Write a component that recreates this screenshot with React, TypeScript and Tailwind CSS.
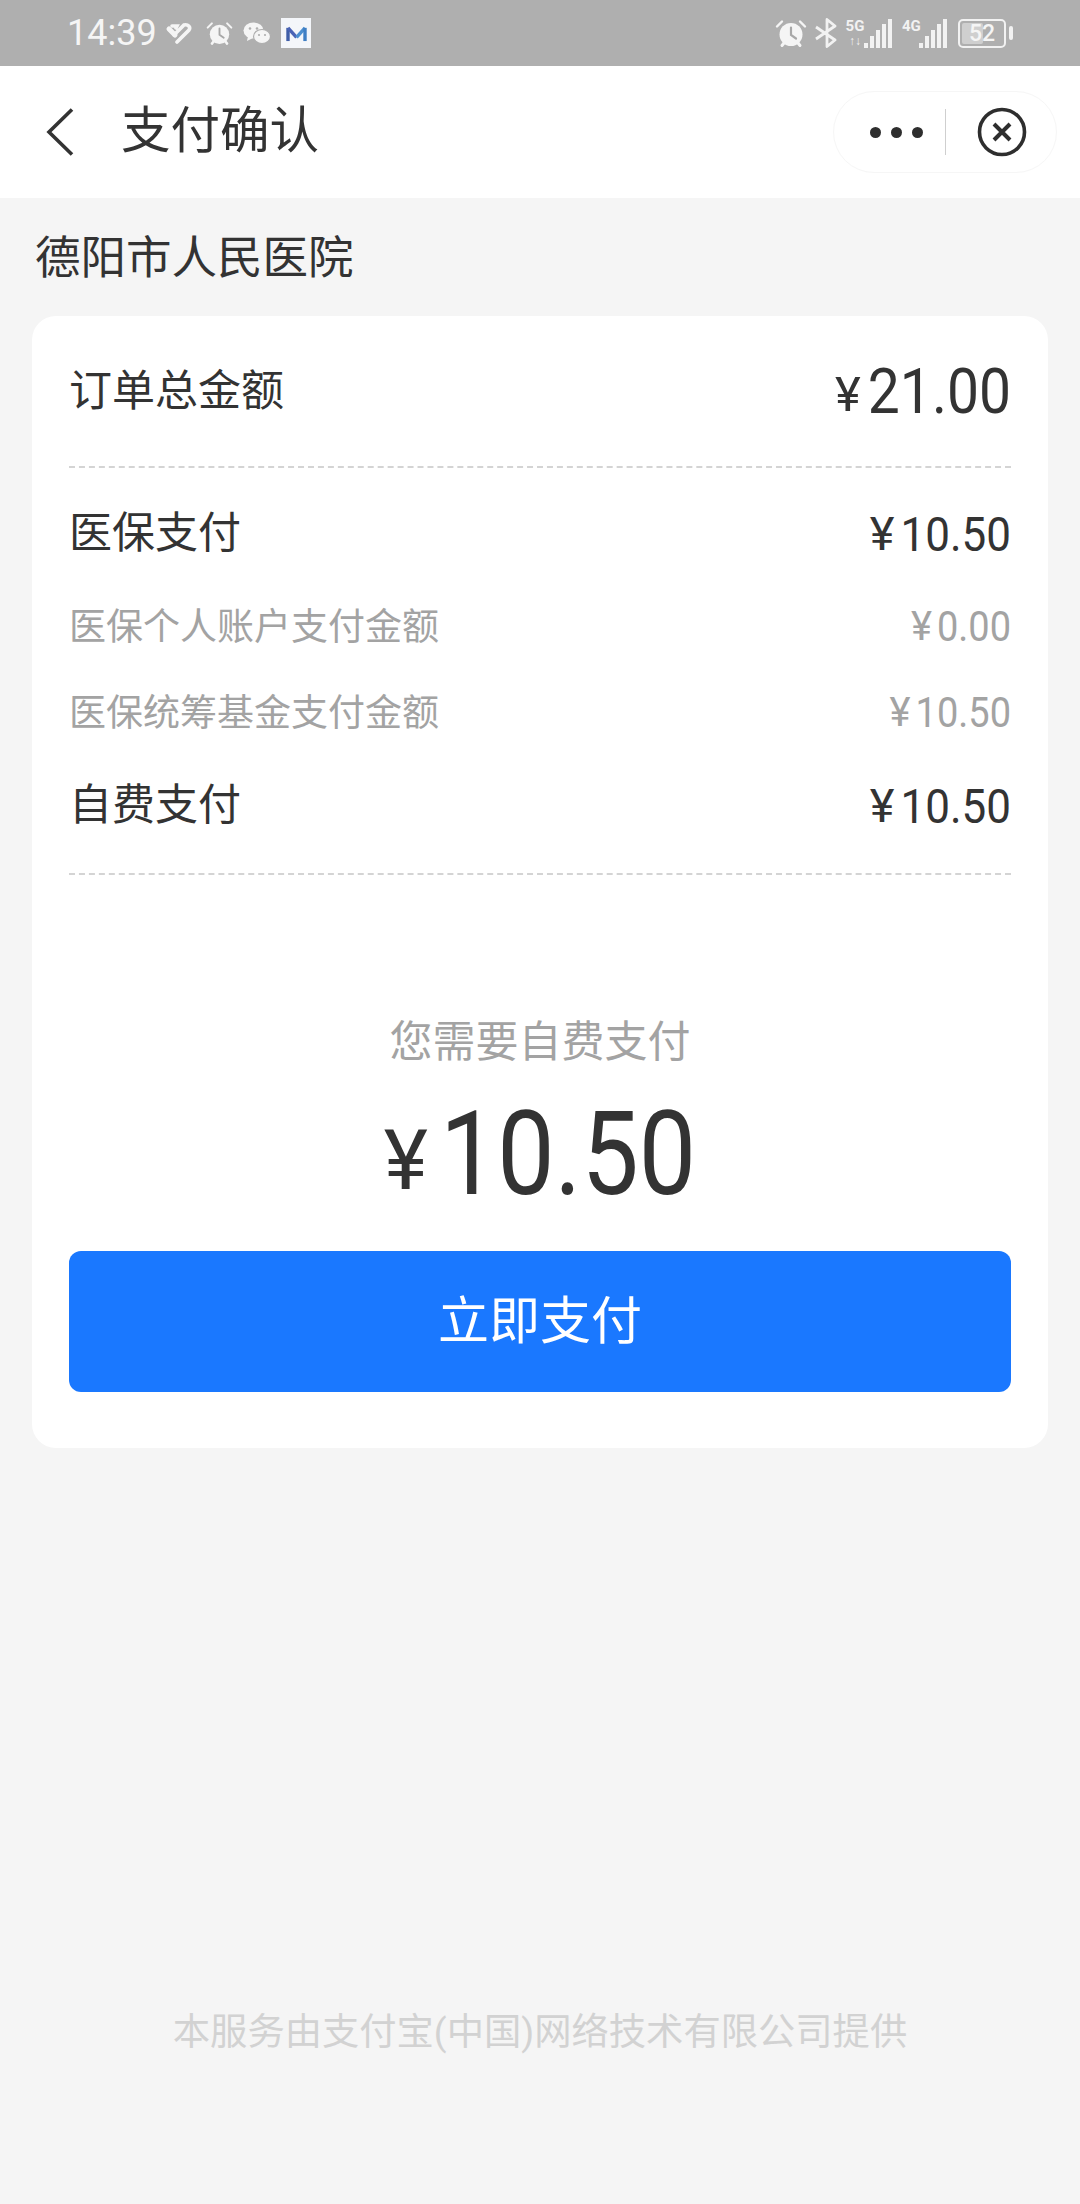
const FONT = "font-['Roboto','Noto_Sans_CJK_SC',sans-serif]";

function AlarmIcon({ className }: { className: string }) {
    return (
        <svg viewBox="0 0 32 28" className={className} fill="none">
            <circle cx="16" cy="15" r="11.5" fill="#f5f5f5" />
            <path d="M16 8v7.5l5 3.5" stroke="#a8a8a8" strokeWidth="2.2" strokeLinecap="round" />
            <path d="M2 7l5-5M30 7l-5-5" stroke="#f5f5f5" strokeWidth="2.4" strokeLinecap="round" />
            <path d="M7 26l2-2.5M25 26l-2-2.5" stroke="#f5f5f5" strokeWidth="3" strokeLinecap="round" />
        </svg>
    );
}

function SignalBars({ bars }: { bars: number[] }) {
    return (
        <div className="flex items-end gap-[2px] h-[29px]">
            {bars.map((h, i) => (
                <div key={i} className="w-[4px] bg-[#f2f2f2]" style={{ height: h }} />
            ))}
        </div>
    );
}

function StatusBar() {
    return (
        <div className="h-[66px] bg-[#afafaf] flex items-center justify-between pl-[67px] pr-[67px]">
            <div className="flex items-center">
                <span className="text-[36px] leading-none text-[#f5f5f5] font-['Roboto',sans-serif] w-[98px]">14:39</span>
                {/* split heart */}
                <svg viewBox="0 0 28 22" className="w-[28px] h-[22px] mr-[13px]" fill="none" stroke="#f5f5f5" strokeLinecap="round">
                    <path d="M4 7l6 6" strokeWidth="5" />
                    <path d="M7 4h5l-1 2M12 20l12-12c2-3-1-6-5-5L9 13" strokeWidth="3.6" />
                </svg>
                <AlarmIcon className="w-[27px] h-[25px] mr-[10px]" />
                {/* wechat */}
                <svg viewBox="0 0 28 23" className="w-[28px] h-[23px] mr-[10px]">
                    <ellipse cx="10.5" cy="8.5" rx="10" ry="8" fill="#f5f5f5" />
                    <path d="M5 14l-1 5 6-3z" fill="#f5f5f5" />
                    <ellipse cx="19" cy="14.5" rx="8.5" ry="7" fill="#f5f5f5" stroke="#afafaf" strokeWidth="1.2" />
                    <circle cx="7" cy="6.5" r="1.3" fill="#afafaf" />
                    <circle cx="14" cy="6.5" r="1.3" fill="#afafaf" />
                    <circle cx="16" cy="13" r="1.1" fill="#afafaf" />
                    <circle cx="22" cy="13" r="1.1" fill="#afafaf" />
                </svg>
                {/* app logo */}
                <div className="w-[30px] h-[30px] bg-[#f4f6fa] flex items-center justify-center">
                    <svg viewBox="0 0 24 18" className="w-[23px] h-[17px]" fill="none" strokeWidth="3.6">
                        <path d="M3 17V3" stroke="#3f5ea8" />
                        <path d="M3 3l9 10" stroke="#4a63b5" />
                        <path d="M12 13l9-10" stroke="#4d8fd0" />
                        <path d="M21 3v14" stroke="#3f7fc4" />
                    </svg>
                </div>
            </div>
            <div className="flex items-center">
                <AlarmIcon className="w-[32px] h-[29px] mr-[8px]" />
                <svg viewBox="0 0 22 30" className="w-[22px] h-[30px] mr-[10px]" fill="none" stroke="#f2f2f2" strokeWidth="2.8" strokeLinejoin="round">
                    <path d="M1 9l19 13-8 6.5V1.5L20 8 1 21" />
                </svg>
                <div className="flex items-end mr-[10px]">
                    <div className="flex flex-col items-center w-[16px] text-[15px] leading-[15px] font-bold text-[#f2f2f2] font-['Roboto',sans-serif]">
                        <span>5G</span>
                        <span className="text-[12px] leading-[14px]">↑↓</span>
                    </div>
                    <div className="ml-[1px]">
                        <SignalBars bars={[5, 12, 18, 24, 29]} />
                    </div>
                </div>
                <div className="flex items-end mr-[11px]">
                    <div className="w-[16px] self-start text-[15px] leading-[15px] font-bold text-[#f2f2f2] font-['Roboto',sans-serif]">4G</div>
                    <div className="ml-[1px]">
                        <SignalBars bars={[5, 12, 18, 24, 29]} />
                    </div>
                </div>
                <div className="w-[48px] h-[29px] rounded-[5px] border-[2px] border-[#f2f2f2] p-[2px] relative">
                    <div className="h-full w-[52%] bg-[#cfcfcf] rounded-[2px]" />
                    <span className="absolute inset-0 flex items-center justify-center text-[23px] leading-none text-[#f5f5f5] font-medium font-['Roboto',sans-serif]">52</span>
                </div>
                <div className="w-[4px] h-[14px] ml-[3px] rounded-full bg-[#f2f2f2]" />
            </div>
        </div>
    );
}

function Header() {
    return (
        <header className="h-[132px] bg-white flex items-center justify-between pl-[46px] pr-[23px]">
            <div className="flex items-center">
                <svg viewBox="0 0 28 48" className="w-[28px] h-[48px]" fill="none" stroke="#333" strokeWidth="3.6">
                    <path d="M26 1.5L3 24l23 22.5" />
                </svg>
                <h1 className="ml-[47px] text-[49.5px] leading-none text-[#333]">支付确认</h1>
            </div>
            <div className="w-[224px] h-[82px] rounded-[41px] border border-[#f6f6f6] flex items-center">
                <div className="flex gap-[10px] pl-[36px] w-[111px]">
                    <span className="w-[11px] h-[11px] rounded-full bg-[#2e2e2e]" />
                    <span className="w-[11px] h-[11px] rounded-full bg-[#2e2e2e]" />
                    <span className="w-[11px] h-[11px] rounded-full bg-[#2e2e2e]" />
                </div>
                <div className="w-px h-[46px] bg-[#cfcfcf]" />
                <svg viewBox="0 0 50 50" className="w-[50px] h-[50px] ml-[31px]" fill="none" stroke="#2e2e2e">
                    <circle cx="25" cy="25" r="22.5" strokeWidth="3.6" />
                    <path d="M17 17l16 16M33 17L17 33" strokeWidth="4" />
                </svg>
            </div>
        </header>
    );
}

function MainRow({ label, amount }: { label: string; amount: string }) {
    return (
        <div className="h-full flex items-center justify-between text-[#333] leading-none">
            <span className="text-[43px]">{label}</span>
            <span className="flex items-baseline text-[44px]">
                <span className="text-[47px] mr-[6px]">¥</span>
                <span className="scale-y-110">{amount}</span>
            </span>
        </div>
    );
}

function SubRow({ label, amount }: { label: string; amount: string }) {
    return (
        <div className="h-[56px] flex items-center justify-between text-[#a3a3a3] leading-none">
            <span className="text-[37px]">{label}</span>
            <span className="flex items-baseline text-[38px]">
                <span className="text-[40px] mr-[5px]">¥</span>
                <span className="scale-y-110">{amount}</span>
            </span>
        </div>
    );
}

function Dashed() {
    return <div className="border-t-2 border-dashed border-[#d4d4d4]" />;
}

export default function App() {
    return (
        <div className={`w-[1080px] h-[2204px] bg-[#f5f5f5] flex flex-col ${FONT}`}>
            <StatusBar />
            <Header />

            <div className="h-[118px] pt-[4px] pl-[35px] flex items-center text-[45.5px] leading-none text-[#333]">德阳市人民医院</div>

            <main className="mx-[32px] h-[1132px] bg-white rounded-[24px] px-[37px]">
                <div className="h-[150px] flex items-center justify-between text-[#333] leading-none">
                    <span className="text-[43px]">订单总金额</span>
                    <span className="flex items-baseline">
                        <span className="text-[49px] mr-[7px]">¥</span>
                        <span className="text-[57px] scale-y-110">21.00</span>
                    </span>
                </div>
                <Dashed />
                <div className="h-[131px]">
                    <MainRow label="医保支付" amount="10.50" />
                </div>
                <SubRow label="医保个人账户支付金额" amount="0.00" />
                <div className="h-[30px]" />
                <SubRow label="医保统筹基金支付金额" amount="10.50" />
                <div className="h-[128px] mb-[4px]">
                    <MainRow label="自费支付" amount="10.50" />
                </div>
                <Dashed />

                <p className="mt-[140px] h-[54px] text-center text-[43px] leading-[54px] text-[#a3a3a3]">您需要自费支付</p>
                <div className="mt-[30px] h-[110px] flex items-baseline justify-center text-[#333]">
                    <span className="text-[84px] leading-[110px] mr-[12px]">¥</span>
                    <span className="text-[102px] leading-[110px] scale-y-115">10.50</span>
                </div>
                <button className="mt-[42px] w-full h-[141px] rounded-[12px] bg-[#1a78ff] text-white text-[51px] leading-none">立即支付</button>
            </main>

            <footer className="mt-[566px] text-center text-[37.3px] leading-none text-[#d2d2d2]">本服务由支付宝(中国)网络技术有限公司提供</footer>
        </div>
    );
}
